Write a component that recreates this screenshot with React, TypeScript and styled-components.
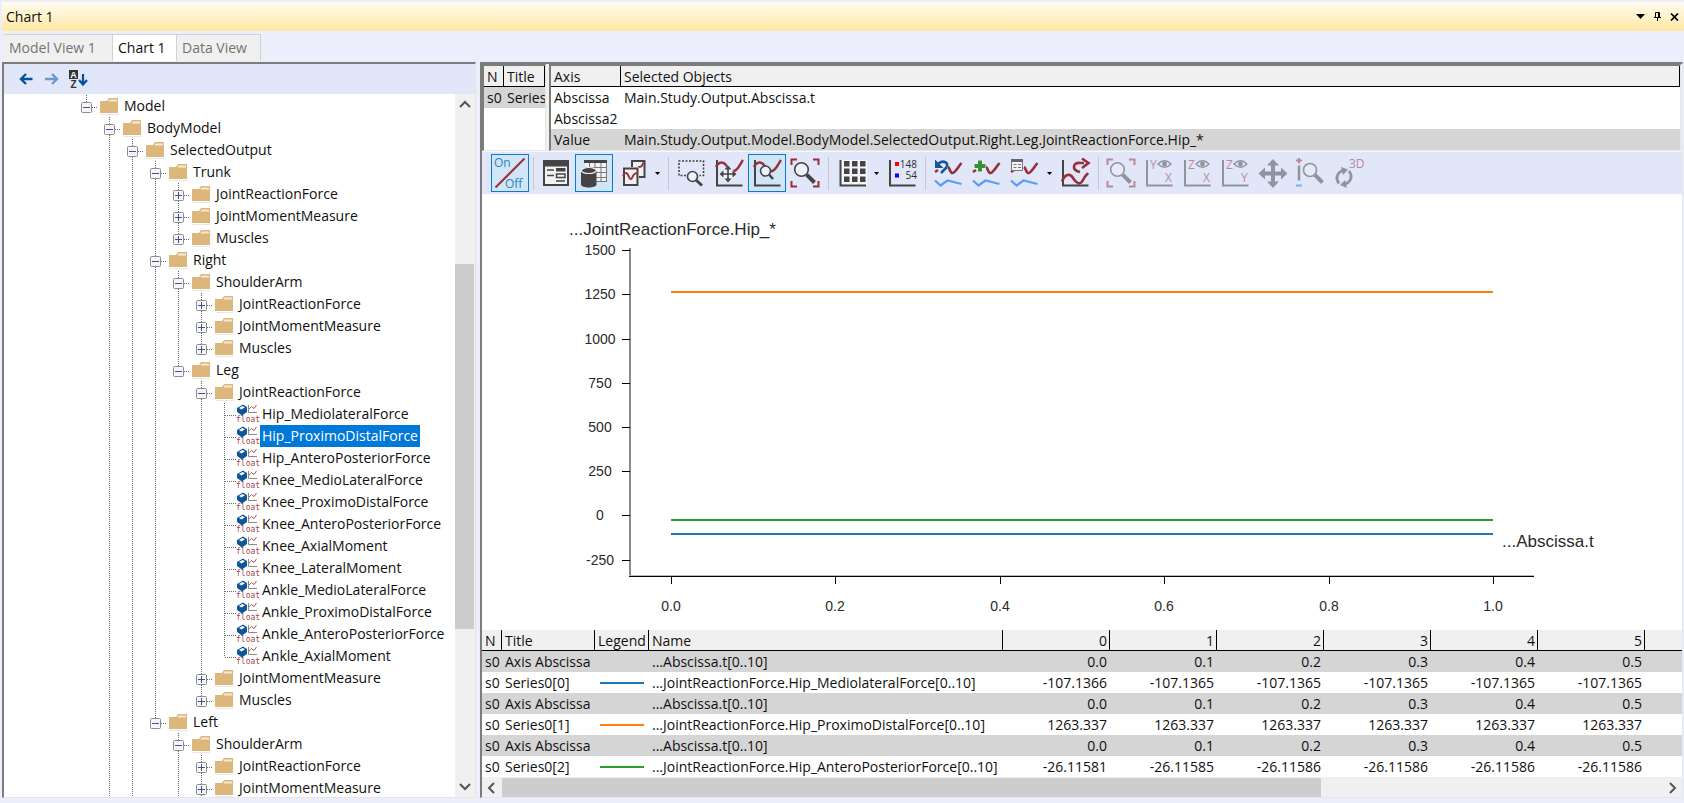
import React from 'react';
import styled, { createGlobalStyle, css } from 'styled-components';

const UI_FONT = '"Open Sans", "Noto Sans", "Liberation Sans", sans-serif';
const PLOT_FONT = '"Liberation Sans", Arial, sans-serif';
const RED = '#96303a';
const DARK = '#444446';

const GlobalStyle = createGlobalStyle`
  *, *::before, *::after { box-sizing: border-box; }
  body { margin: 0; background: #eceffb; }
  button { font: inherit; color: inherit; padding: 0; border: 0; background: none; }
`;

const Page = styled.div`
  display: flex;
  flex-direction: column;
  height: 100vh;
  padding: 2px 0 5px 2px;
  background: #eceffb;
  color: #101010;
  font: 14px/20px ${UI_FONT};
  overflow: hidden;
`;

/* ---------- title bar and tabs ---------- */

const TitleBar = styled.header`
  display: flex;
  align-items: center;
  flex: none;
  height: 29px;
  padding: 0 1px 0 4px;
  background: linear-gradient(#fffcf0, #ffe8a4);
`;

const WindowTitle = styled.h1`
  flex: 1;
  margin: 0;
  font: inherit;
`;

const WindowButton = styled.button`
  display: grid;
  place-items: center;
  width: 17px;
  height: 20px;
  svg { display: block; }
`;

const Tabs = styled.nav`
  display: flex;
  flex: none;
  height: 31px;
  padding: 3px 0 1px 2px;
`;

const Tab = styled.button<{ $active?: boolean }>`
  flex: none;
  width: ${(p) => (p.$active ? 64 : 84)}px;
  padding-left: 5px;
  border-top: 1px solid #d2d2d2;
  border-right: 1px solid #d2d2d2;
  background: ${(p) => (p.$active ? '#fff' : '#f0f0f0')};
  color: ${(p) => (p.$active ? '#101010' : '#747474')};
  text-align: left;
  white-space: nowrap;
  &:first-child { width: 109px; }
`;

/* ---------- workspace ---------- */

const Workspace = styled.main`
  display: flex;
  flex: 1;
  min-height: 0;
  gap: 4px;
  padding-right: 1px;
`;

const sunken = css`
  border: solid;
  border-width: 2px 1px 1px 2px;
  border-color: #7c7c7c #e6e6e6 #e6e6e6 #7c7c7c;
`;

const TreePanel = styled.section`
  ${sunken}
  display: flex;
  flex-direction: column;
  flex: 0 0 474px;
  min-width: 0;
  background: #fff;
`;

const TreeTools = styled.div`
  display: flex;
  align-items: center;
  flex: none;
  height: 30px;
  padding-left: 9px;
  background: #e1e6f8;
`;

const TreeTool = styled.button`
  display: grid;
  place-items: center;
  width: 26px;
  height: 26px;
  svg { display: block; }
`;

const TreeBody = styled.div`
  display: flex;
  flex: 1;
  min-height: 0;
`;

const Tree = styled.ul`
  flex: 1;
  min-width: 0;
  margin: 0;
  padding: 1px 0 0 71px;
  list-style: none;
  overflow: hidden;
`;

const TreeRow = styled.li`
  display: flex;
  height: 22px;
  white-space: nowrap;
`;

const Guide = styled.span`
  flex: none;
  width: 23px;
  height: 22px;
  svg { display: block; }
`;

const Expander = styled.button`
  flex: none;
  width: 23px;
  height: 22px;
  svg { display: block; }
`;

const ItemIcon = styled.svg`
  flex: none;
  display: block;
  width: 24px;
  height: 22px;
`;

const ItemLabel = styled.span<{ $selected?: boolean }>`
  padding: 0 2px;
  line-height: 22px;
  background: ${(p) => (p.$selected ? '#0078d7' : 'transparent')};
  color: ${(p) => (p.$selected ? '#fff' : 'inherit')};
`;

/* ---------- scroll bars ---------- */

const VScroll = styled.div`
  display: flex;
  flex-direction: column;
  flex: none;
  width: 20px;
  padding-right: 1px;
  background: #f0f0f0;
`;

const HScroll = styled.div`
  display: flex;
  flex: none;
  height: 20px;
  padding: 1px 0 0;
  background: #f0f0f0;
`;

const ScrollArrow = styled.button`
  display: grid;
  place-items: center;
  flex: none;
  width: 20px;
  height: 20px;
`;

const VTrack = styled.div`
  display: flex;
  flex-direction: column;
  flex: 1;
  &::before { content: ''; flex: 150; }
  &::after { content: ''; flex: 148; }
`;

const HTrack = styled.div`
  display: flex;
  flex: 1;
  &::after { content: ''; flex: 340; }
`;

const VThumb = styled.div`
  flex: 365;
  background: #cdcdcd;
`;

const HThumb = styled.div`
  flex: 818;
  background: #cdcdcd;
`;

/* ---------- chart side ---------- */

const ChartPanel = styled.section`
  ${sunken}
  display: flex;
  flex-direction: column;
  flex: 1;
  min-width: 0;
  background: #fff;
`;

const SelectionArea = styled.div`
  display: flex;
  flex: none;
  padding-right: 1px;
  background: #f0f0f0;
`;

const SeriesPane = styled.div`
  ${sunken}
  flex: 0 0 64px;
  margin-right: 3px;
  background: #fff;
  overflow: hidden;
`;

const AxisPane = styled.div`
  ${sunken}
  flex: 1;
  min-width: 0;
  background: #fff;
  overflow: hidden;
`;

const Grid = styled.table`
  width: 100%;
  table-layout: fixed;
  border-collapse: separate;
  border-spacing: 0;
  white-space: nowrap;
`;

const Head = styled.th<{ $num?: boolean; $open?: boolean }>`
  height: 21px;
  padding: 1px 2px 0 3px;
  border-bottom: 1px solid #000;
  border-right: ${(p) => (p.$open ? '0' : '1px solid #000')};
  background: #f0f0f0;
  font-weight: 400;
  line-height: 19px;
  text-align: ${(p) => (p.$num ? 'right' : 'left')};
  overflow: hidden;
`;

const Cell = styled.td<{ $num?: boolean }>`
  height: 21px;
  padding: 0 3px;
  line-height: 20px;
  text-align: ${(p) => (p.$num ? 'right' : 'left')};
  overflow: hidden;
`;

const Row = styled.tr<{ $shaded?: boolean }>`
  background: ${(p) => (p.$shaded ? '#d5d5d5' : '#fff')};
`;

const LegendLine = styled.svg`
  display: block;
  width: 44px;
  height: 2px;
  margin: 0 2px;
`;

const ToolBar = styled.div`
  display: flex;
  align-items: center;
  flex: none;
  height: 43px;
  padding: 0 0 0 9px;
  border-top: 1px solid #f8f8f8;
  background: #e1e6f8;
`;

const ToolButton = styled.button<{ $on?: boolean; $off?: boolean }>`
  flex: none;
  width: 38px;
  height: 38px;
  background: ${(p) => (p.$on ? '#d0e6f6' : 'transparent')};
  box-shadow: ${(p) => (p.$on ? 'inset 0 0 0 1px #0a7ad8' : 'none')};
  svg { display: block; opacity: ${(p) => (p.$off ? 0.5 : 1)}; }
`;

const MenuArrow = styled.button`
  display: grid;
  place-items: center;
  flex: none;
  width: 13px;
  height: 38px;
`;

const Divider = styled.span`
  flex: none;
  width: 8px;
  height: 33px;
  background: linear-gradient(#c5c8d2, #c5c8d2) 4px 0 / 1px 100% no-repeat;
`;

const PlotArea = styled.div`
  flex: 1;
  min-height: 0;
`;

const Plot = styled.svg`
  display: block;
  width: 100%;
  height: 100%;
  font-family: ${PLOT_FONT};
  fill: #2a2a2a;
`;

/* ---------- tree ---------- */

type Node = { name: string; kids?: Node[]; leaf?: boolean; more?: boolean };

const closed = (name: string): Node => ({ name });
const groups = () => ['JointReactionForce', 'JointMomentMeasure', 'Muscles'].map(closed);
const firstGroups = () => groups().slice(0, 2).map((g) => ({ ...g, more: true }));
const floats = [
  'Hip_MediolateralForce', 'Hip_ProximoDistalForce', 'Hip_AnteroPosteriorForce',
  'Knee_MedioLateralForce', 'Knee_ProximoDistalForce', 'Knee_AnteroPosteriorForce',
  'Knee_AxialMoment', 'Knee_LateralMoment',
  'Ankle_MedioLateralForce', 'Ankle_ProximoDistalForce', 'Ankle_AnteroPosteriorForce',
  'Ankle_AxialMoment',
].map((name) => ({ name, leaf: true }));

const model: Node = {
  name: 'Model',
  kids: [{
    name: 'BodyModel',
    more: true,
    kids: [{
      name: 'SelectedOutput',
      more: true,
      kids: [
        { name: 'Trunk', kids: groups() },
        {
          name: 'Right',
          kids: [
            { name: 'ShoulderArm', kids: groups() },
            {
              name: 'Leg',
              kids: [
                { name: 'JointReactionForce', kids: floats },
                closed('JointMomentMeasure'),
                closed('Muscles'),
              ],
            },
          ],
        },
        { name: 'Left', kids: [{ name: 'ShoulderArm', more: true, kids: firstGroups() }] },
      ],
    }],
  }],
};

const SELECTED = 'Hip_ProximoDistalForce';

const Dots = ({ d }: { d: string }) => (
  <path d={d} stroke="#6a6a6a" strokeDasharray="1 1" fill="none" />
);

const FolderIcon = () => (
  <ItemIcon viewBox="0 0 24 22">
    <path d="M2 18V6h7l2-3h9v15z" fill="#dcb67a" />
    <path d="M11.500 4.500h7.500v2h-8.500z" fill="#f5ead8" />
    <path d="M2.500 19.500h18" stroke="#e8e8e8" />
  </ItemIcon>
);

const FloatIcon = () => (
  <ItemIcon viewBox="0 0 24 22">
    <path d="M1 5l6-3.500L11 4v5l-5 3.500L1 9z" fill="#0d579c" />
    <path d="M3 5l3.500-2L9 4.200 5.500 6.500z" fill="#fff" />
    <path d="M12.500 2v7.500H21" stroke="#8a8a8a" fill="none" />
    <path d="M13 6l2.500-2.500 2.500 2L20.500 2" stroke="#b0505a" fill="none" />
    <text x="0" y="19" fontSize="8" fontFamily="DejaVu Sans Mono, monospace" fill="#a8434c">float</text>
  </ItemIcon>
);

type BranchProps = { node: Node; last: boolean; trail: boolean[] };

function Branch({ node, last, trail }: BranchProps) {
  const open = !!node.kids;
  const goesOn = !last || !!node.more;
  return (
    <>
      <TreeRow role="treeitem" aria-level={trail.length + 1}
        aria-expanded={node.leaf ? undefined : open} aria-selected={node.name === SELECTED}>
        {trail.map((on, i) => (
          <Guide key={i}>
            <svg width="23" height="22">{on && <Dots d="M11.500 0v22" />}</svg>
          </Guide>
        ))}
        {node.leaf ? (
          <Guide>
            <svg width="23" height="22">
              <Dots d={`M11.500 0v${last ? 12 : 22}M12 12.500h11`} />
            </svg>
          </Guide>
        ) : (
          <Expander aria-label={`${open ? 'Collapse' : 'Expand'} ${node.name}`}>
            <svg width="23" height="22">
              <Dots d={`M11.500 0v7M17 12.500h6${goesOn ? 'M11.500 18v4' : ''}`} />
              <rect x="6.500" y="7.500" width="10" height="10" rx="1" fill="#f6f6f6" stroke="#8c8c8c" />
              <path d={`M8 12.500h7${open ? '' : 'M11.500 9v7'}`} stroke="#3a52a0" />
            </svg>
          </Expander>
        )}
        {node.leaf ? <FloatIcon /> : <FolderIcon />}
        <ItemLabel $selected={node.name === SELECTED}>{node.name}</ItemLabel>
      </TreeRow>
      {node.kids?.map((kid, i) => (
        <Branch key={i} node={kid} last={i === node.kids!.length - 1} trail={[...trail, goesOn]} />
      ))}
    </>
  );
}

/* ---------- toolbar icons ---------- */

const Icon = ({ children }: { children: React.ReactNode }) => (
  <svg width="38" height="38" viewBox="0 0 38 38" fill="none" fontFamily={UI_FONT}>{children}</svg>
);

const Axes = () => <path d="M7 6v25.500h25.500" stroke={DARK} strokeWidth="2" />;

const Curve = () => (
  <path d="M6 13C8 8 13 7 16 11S20 18 24 17 30 10 33 6" stroke={RED} strokeWidth="2.400" />
);

const Lens = ({ x, y, r, tx, ty, w = 3 }: { x: number; y: number; r: number; tx: number; ty: number; w?: number }) => (
  <>
    <circle cx={x} cy={y} r={r} fill="#eef1fa" stroke={DARK} strokeWidth="1.600" />
    <path d={`M${x + r * 0.75} ${y + r * 0.75}L${tx} ${ty}`} stroke={DARK} strokeWidth={w} />
  </>
);

const FitIcon = () => (
  <Icon>
    <path d="M5.500 11V5.500H11M27 5.500h5.500V11M32.500 27v5.500H27M11 32.500H5.500V27" stroke={RED} strokeWidth="2" />
    <Lens x={15.500} y={15.500} r={6.800} tx={28.500} ty={28.500} w={4} />
  </Icon>
);

const TwoCurves = ({ children }: { children: React.ReactNode }) => (
  <Icon>
    <path d="M6 18l3-2M19 13c2 1 2 6 4.500 6S29 13 32.500 9" stroke={RED} strokeWidth="2.600" />
    <path d="M6 26.500l5.500 5 7-5 14 3.500" stroke="#5b9df5" strokeWidth="2.200" />
    {children}
  </Icon>
);

const ViewIcon = ({ up, across }: { up: string; across: string }) => (
  <Icon>
    <Axes />
    <text x="10" y="15" fontSize="12" fill={RED}>{up}</text>
    <text x="25" y="28" fontSize="12" fill={RED}>{across}</text>
    <path d="M18 10q6.500-6.500 13 0q-6.500 6.500-13 0z" stroke={DARK} strokeWidth="1.300" />
    <circle cx="24.500" cy="10" r="2.400" fill={DARK} />
  </Icon>
);

const MoveIcon = () => (
  <Icon>
    <path d="M19 10v19M9 19.500h20" stroke={DARK} strokeWidth="4" />
    <path d="M19 5l6 6.500H13zM19 34l6-6.500H13zM4.500 19.500L11 13.500v12zM33.500 19.500L27 13.500v12z" fill={DARK} />
  </Icon>
);

const DropMark = () => (
  <svg width="5" height="3"><path d="M0 0h5L2.500 3z" fill="#000" /></svg>
);

const Tools = () => (
  <ToolBar role="toolbar" aria-label="Chart tools">
    <ToolButton $on aria-label="On/Off">
      <Icon>
        <path d="M4.500 33.500L33.500 4.500" stroke={RED} strokeWidth="2" />
        <text x="3" y="13" fontSize="12" fill="#2e82c4">On</text>
        <text x="14" y="34" fontSize="12" fill="#2e82c4">Off</text>
      </Icon>
    </ToolButton>
    <Divider />
    <ToolButton aria-label="Properties">
      <Icon>
        <path d="M7 7h24v24H7z" fill="#f2f2f2" stroke={DARK} strokeWidth="2" />
        <path d="M6 6h26v6.500H6z" fill={DARK} />
        <path d="M10 16h7M10 21.500h7M19 27h9" stroke={DARK} strokeWidth="1.500" />
        <path d="M19 14h9.500v3.500H19z" fill={DARK} />
        <path d="M19.500 20h8.500v3.500h-8.500z" stroke={DARK} strokeWidth="1.500" />
      </Icon>
    </ToolButton>
    <ToolButton $on aria-label="Data table">
      <Icon>
        <path d="M10 6h22v22H10z" fill="#f2f2f2" />
        <path d="M9 9V6h23v3z" fill={DARK} />
        <path d="M14.500 9v6M20 9v19M26 9v19M31.500 9v19M10 13.500h22M21 18.500h11M21 23.500h11M21 27.500h11" stroke="#77777a" />
        <path d="M6 16.500v14c0 4 15.500 4 15.500 0v-14z" fill={DARK} />
        <ellipse cx="13.800" cy="16.500" rx="7.500" ry="3" fill={DARK} stroke="#f2f2f2" strokeWidth="1.200" />
      </Icon>
    </ToolButton>
    <ToolButton aria-label="Copy charts">
      <Icon>
        <path d="M19 7h12.500v16H19z" fill="#f2f2f2" stroke={DARK} strokeWidth="2" />
        <path d="M25 12.500c2 1.500 4 0 5.500-4" stroke={RED} strokeWidth="2" />
        <path d="M9.500 13h16.500v19.500H9.500z" fill="#f2f2f2" />
        <path d="M11 14.500h13.500V31H11z" fill="#f2f2f2" stroke={DARK} strokeWidth="2" />
        <path d="M10 22c2-4 4-4 5.500 0s3 4 4 1 2-4 5.500-4" stroke={RED} strokeWidth="2" />
      </Icon>
    </ToolButton>
    <MenuArrow aria-label="Copy options"><DropMark /></MenuArrow>
    <Divider />
    <ToolButton aria-label="Zoom to box">
      <Icon>
        <path d="M14 21.500H7V7h24.500v14.500h-4" stroke={DARK} strokeWidth="1.600" strokeDasharray="2 1.500" />
        <Lens x={20.500} y={22.500} r={5} tx={30} ty={31.500} />
      </Icon>
    </ToolButton>
    <ToolButton aria-label="Pan">
      <Icon>
        <Axes /><Curve />
        <path d="M18 11.500l8.500 8.500-8.500 8.500L9.500 20z" fill="#eef1fa" />
        <path d="M18 14v12M12 20h12" stroke={DARK} strokeWidth="1.600" />
        <path d="M18 11.500l3.500 4h-7zM18 28.500l3.500-4h-7zM9.500 20l4-3.500v7zM26.500 20l-4-3.500v7z" fill={DARK} />
      </Icon>
    </ToolButton>
    <ToolButton $on aria-label="Zoom">
      <Icon><Axes /><Curve /><Lens x={17.500} y={17} r={5} tx={25} ty={25} w={2.500} /></Icon>
    </ToolButton>
    <ToolButton aria-label="Fit"><FitIcon /></ToolButton>
    <Divider />
    <ToolButton aria-label="Grid">
      <Icon>
        <path d="M9.500 6H35v24.500H9.500z" fill="#f6f6f8" />
        <path d="M8.500 6v25.500H34" stroke={DARK} strokeWidth="2" />
        {[12, 20, 28].map((x) => [7, 14.5, 22.5].map((y) => (
          <rect key={`${x} ${y}`} x={x} y={y} width="5.500" height="5.500" fill={DARK} />
        )))}
      </Icon>
    </ToolButton>
    <MenuArrow aria-label="Grid options"><DropMark /></MenuArrow>
    <ToolButton aria-label="Sample values">
      <Icon>
        <Axes />
        <path d="M12 8h4v4h-4z" fill="#f00" />
        <path d="M12 19.500h4v4h-4z" fill="#00f" />
        <text x="34" y="13.500" fontSize="10" textAnchor="end" fill="#303030">148</text>
        <text x="34" y="25" fontSize="10" textAnchor="end" fill="#303030">54</text>
      </Icon>
    </ToolButton>
    <Divider />
    <ToolButton aria-label="Undo curve">
      <TwoCurves>
        <path d="M9 10c5-5 12-1 8 4l-5 5" stroke="#14599c" strokeWidth="2.600" />
        <path d="M6 5.500v8.500h8.500z" fill="#14599c" />
      </TwoCurves>
    </ToolButton>
    <ToolButton aria-label="Add curve">
      <TwoCurves>
        <path d="M13 6v12M7 12h12" stroke="#f6f6f8" strokeWidth="5.500" />
        <path d="M13 6.500v11M7.500 12h11" stroke="#35902f" strokeWidth="4" />
      </TwoCurves>
    </ToolButton>
    <ToolButton aria-label="Curve properties">
      <TwoCurves>
        <path d="M6.500 5.500h11v11h-11z" fill="#f2f2f2" stroke="#77777a" />
        <path d="M6 5h12v3H6z" fill="#66666a" />
        <path d="M8.500 10.500h3M8.500 13.500h3M13 10.500h3M13 13.500h3" stroke="#77777a" />
      </TwoCurves>
    </ToolButton>
    <MenuArrow aria-label="Curve options"><DropMark /></MenuArrow>
    <ToolButton aria-label="Redo chart">
      <Icon>
        <Axes />
        <path d="M6 27.500C9 20 14 19 17 24s7 8 10 2 3-4 5-7" stroke={RED} strokeWidth="2.600" />
        <path d="M24 18c-9-2-7-10 0-9h4" stroke={RED} strokeWidth="2.600" />
        <path d="M26 4.500l6.500 4.500-6.500 5" stroke={RED} strokeWidth="2.600" />
      </Icon>
    </ToolButton>
    <Divider />
    <ToolButton $off aria-label="Fit 3D"><FitIcon /></ToolButton>
    <ToolButton $off aria-label="View YX"><ViewIcon up="Y" across="X" /></ToolButton>
    <ToolButton $off aria-label="View ZX"><ViewIcon up="Z" across="X" /></ToolButton>
    <ToolButton $off aria-label="View ZY"><ViewIcon up="Z" across="Y" /></ToolButton>
    <ToolButton $off aria-label="Move"><MoveIcon /></ToolButton>
    <ToolButton $off aria-label="Zoom in or out">
      <Icon>
        <path d="M7 4v5.500M4 6.500h6" stroke={RED} strokeWidth="2" />
        <path d="M7 11.500v15" stroke={DARK} strokeWidth="2.500" />
        <path d="M4 31.500h6" stroke="#1a7fd0" strokeWidth="2" />
        <Lens x={18} y={16} r={6.500} tx={30.500} ty={28.500} w={4} />
      </Icon>
    </ToolButton>
    <ToolButton $off aria-label="Rotate 3D">
      <Icon>
        <text x="19" y="14" fontSize="12" fill={RED}>3D</text>
        <path d="M9 29.500c-4-5-2-11 4-13M19 17c4 5 2 11-4 13" stroke={DARK} strokeWidth="2.800" />
        <path d="M11 13l7 2.500-5 5.500zM17 34l-7-3 5-5z" fill={DARK} />
      </Icon>
    </ToolButton>
  </ToolBar>
);

/* ---------- plot ---------- */

const yTicks = [1500, 1250, 1000, 750, 500, 250, 0, -250];
const xTicks = ['0.0', '0.2', '0.4', '0.6', '0.8', '1.0'];
const yAt = (v: number) => Math.round(321.3 - v * 0.17680) + 0.5;
const xAt = (i: number) => Math.round(189 + i * 164.400);

const curves = [
  { color: '#ff7f0e', value: 1263.337 },
  { color: '#2ca02c', value: -26.11586 },
  { color: '#1f77b4', value: -107.1365 },
];

const ChartPlot = () => (
  <Plot viewBox="0 0 1200 436" preserveAspectRatio="xMinYMin meet" role="img" aria-label="Joint reaction forces">
    <text x="87" y="41" fontSize="17">...JointReactionForce.Hip_*</text>
    <path d="M148 54v329" stroke="#8a8a8a" strokeWidth="2" />
    <path d="M147 382.500h905" stroke="#000" />
    <path d="M147 381.500h905" stroke="#b8b8b8" />
    {yTicks.map((v) => (
      <g key={v}>
        <path d={`M140 ${yAt(v)}h8`} stroke="#000" />
        <text x="118" y={yAt(v) + 4.500} fontSize="14" textAnchor="middle">{v}</text>
      </g>
    ))}
    {xTicks.map((t, i) => (
      <g key={t}>
        <path d={`M${xAt(i) + 0.5} 383v7`} stroke="#000" />
        <text x={xAt(i)} y="417" fontSize="14" textAnchor="middle">{t}</text>
      </g>
    ))}
    {curves.map((c) => (
      <path key={c.color} d={`M189 ${yAt(c.value) - 0.5}h822`} stroke={c.color} strokeWidth="2" />
    ))}
    <text x="1020" y="353" fontSize="17">...Abscissa.t</text>
  </Plot>
);

/* ---------- data ---------- */

const times = ['0.0', '0.1', '0.2', '0.3', '0.4', '0.5'];
const series = [
  { color: '#1f77b4', name: 'Hip_MediolateralForce', values: ['-107.1366', ...Array(5).fill('-107.1365')] },
  { color: '#ff7f0e', name: 'Hip_ProximoDistalForce', values: Array(6).fill('1263.337') },
  { color: '#2ca02c', name: 'Hip_AnteroPosteriorForce', values: ['-26.11581', '-26.11585', ...Array(4).fill('-26.11586')] },
];

const DataTable = () => (
  <Grid>
    <colgroup>
      <col width="20" /><col width="93" /><col width="54" /><col width="354" />
      {times.map((t) => <col key={t} width="107" />)}
      <col />
    </colgroup>
    <thead>
      <tr>
        <Head>N</Head><Head>Title</Head><Head>Legend</Head><Head>Name</Head>
        {times.map((t, i) => <Head key={t} $num>{i}</Head>)}
        <Head $open />
      </tr>
    </thead>
    <tbody>
      {series.map((s, i) => (
        <React.Fragment key={s.name}>
          <Row $shaded>
            <Cell>s0</Cell><Cell>Axis Abscissa</Cell><Cell /><Cell>...Abscissa.t[0..10]</Cell>
            {times.map((t) => <Cell key={t} $num>{t}</Cell>)}
            <Cell />
          </Row>
          <Row>
            <Cell>s0</Cell>
            <Cell>{`Series0[${i}]`}</Cell>
            <Cell><LegendLine><path d="M0 1h44" stroke={s.color} strokeWidth="2" /></LegendLine></Cell>
            <Cell>{`...JointReactionForce.${s.name}[0..10]`}</Cell>
            {s.values.map((v, k) => <Cell key={k} $num>{v}</Cell>)}
            <Cell />
          </Row>
        </React.Fragment>
      ))}
    </tbody>
  </Grid>
);

const axes = [
  ['Abscissa', 'Main.Study.Output.Abscissa.t'],
  ['Abscissa2', ''],
  ['Value', 'Main.Study.Output.Model.BodyModel.SelectedOutput.Right.Leg.JointReactionForce.Hip_*'],
];

const Chevron = ({ d }: { d: string }) => (
  <svg width="12" height="12" fill="none"><path d={d} stroke="#555" strokeWidth="2" /></svg>
);

export default function App() {
  return (
    <Page>
      <GlobalStyle />
      <TitleBar>
        <WindowTitle>Chart 1</WindowTitle>
        <WindowButton aria-label="Window menu">
          <svg width="9" height="5"><path d="M0 0h9L4.500 5z" /></svg>
        </WindowButton>
        <WindowButton aria-label="Pin">
          <svg width="7" height="9" fill="none" stroke="#000"><path d="M1.500 6V.5h4V6M4.500 1v5M0 5.500h7M3.500 6v3" /></svg>
        </WindowButton>
        <WindowButton aria-label="Close">
          <svg width="9" height="8" fill="none"><path d="M1 .5l7 7M8 .5l-7 7" stroke="#000" strokeWidth="1.700" /></svg>
        </WindowButton>
      </TitleBar>
      <Tabs aria-label="Views">
        <Tab>Model View 1</Tab>
        <Tab $active>Chart 1</Tab>
        <Tab>Data View</Tab>
      </Tabs>
      <Workspace>
        <TreePanel>
          <TreeTools>
            <TreeTool aria-label="Back">
              <svg width="14" height="12" fill="none"><path d="M13.500 6H2M7 1L2 6l5 5" stroke="#04539c" strokeWidth="2.400" /></svg>
            </TreeTool>
            <TreeTool aria-label="Forward">
              <svg width="14" height="12" fill="none"><path d="M0 6h12M7 1l5 5-5 5" stroke="#6a9bd0" strokeWidth="2.400" /></svg>
            </TreeTool>
            <TreeTool aria-label="Sort A to Z">
              <svg width="20" height="20" fontFamily="Liberation Sans, sans-serif" fontWeight="700">
                <path d="M1 1h9v9H1z" fill="#333" />
                <text x="5.500" y="9" fontSize="9" textAnchor="middle" fill="#fff">A</text>
                <text x="5.500" y="19" fontSize="10" textAnchor="middle" fill="#333">Z</text>
                <path d="M15 5v10M11 11l4 4.500 4-4.500" stroke="#04539c" strokeWidth="2.200" fill="none" />
              </svg>
            </TreeTool>
          </TreeTools>
          <TreeBody>
            <Tree role="tree" aria-label="Model tree"><Branch node={model} last trail={[]} /></Tree>
            <VScroll>
              <ScrollArrow aria-label="Scroll up"><Chevron d="M1 9l5-5 5 5" /></ScrollArrow>
              <VTrack><VThumb /></VTrack>
              <ScrollArrow aria-label="Scroll down"><Chevron d="M1 3l5 5 5-5" /></ScrollArrow>
            </VScroll>
          </TreeBody>
        </TreePanel>
        <ChartPanel>
          <SelectionArea>
            <SeriesPane>
              <Grid>
                <colgroup><col width="20" /><col /></colgroup>
                <thead><tr><Head>N</Head><Head>Title</Head></tr></thead>
                <tbody><Row $shaded><Cell>s0</Cell><Cell>Series0</Cell></Row></tbody>
              </Grid>
            </SeriesPane>
            <AxisPane>
              <Grid>
                <colgroup><col width="70" /><col /></colgroup>
                <thead><tr><Head>Axis</Head><Head>Selected Objects</Head></tr></thead>
                <tbody>
                  {axes.map(([axis, object]) => (
                    <Row key={axis} $shaded={axis === 'Value'}><Cell>{axis}</Cell><Cell>{object}</Cell></Row>
                  ))}
                </tbody>
              </Grid>
            </AxisPane>
          </SelectionArea>
          <Tools />
          <PlotArea><ChartPlot /></PlotArea>
          <DataTable />
          <HScroll>
            <ScrollArrow aria-label="Scroll left"><Chevron d="M8 1L3 6l5 5" /></ScrollArrow>
            <HTrack><HThumb /></HTrack>
            <ScrollArrow aria-label="Scroll right"><Chevron d="M4 1l5 5-5 5" /></ScrollArrow>
          </HScroll>
        </ChartPanel>
      </Workspace>
    </Page>
  );
}
